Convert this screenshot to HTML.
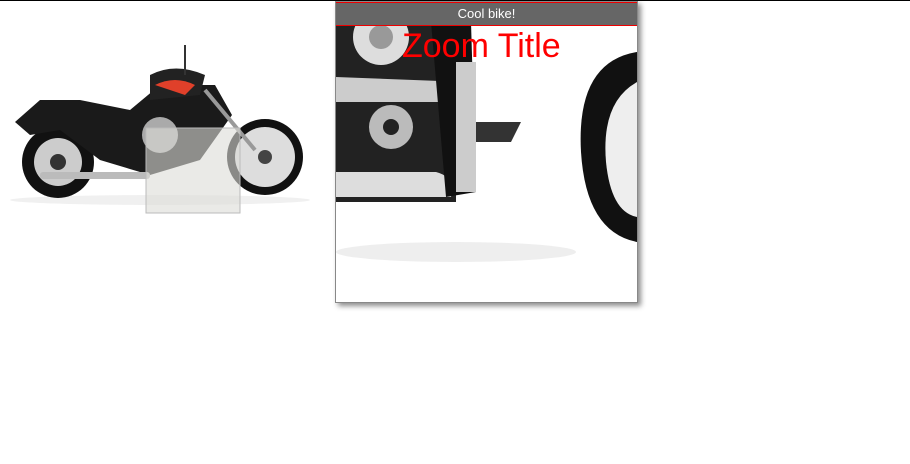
<!DOCTYPE html>
<html><head><style>
body{margin:0;width:910px;height:464px;background:#fff;position:relative;overflow:hidden;font-family:"Liberation Sans",sans-serif}
.topline{position:absolute;left:0;top:0;width:910px;height:1px;background:#000}
.zoom{position:absolute;left:335px;top:1px;width:301px;height:300px;border:1px solid #888;background:#fff;box-shadow:3px 3px 5px rgba(0,0,0,.45);overflow:hidden}
.bar{position:absolute;left:0;top:0;width:100%;height:22px;background:#666;border-top:1px solid #e00;border-bottom:1px solid #e00;color:#fff;font-size:13px;text-align:center;line-height:22px}
.zt{position:absolute;left:66px;top:24px;color:#f00;font-size:34px;line-height:40px}
</style></head><body>
<div class="topline"></div>
<svg style="position:absolute;left:0;top:0" width="330" height="230">
<ellipse cx="160" cy="200" rx="150" ry="5" fill="#f0f0f0"/>
<circle cx="58" cy="162" r="36" fill="#111"/><circle cx="58" cy="162" r="24" fill="#ccc"/><circle cx="58" cy="162" r="8" fill="#333"/>
<circle cx="265" cy="157" r="38" fill="#111"/><circle cx="265" cy="157" r="30" fill="#ddd"/><circle cx="265" cy="157" r="7" fill="#444"/>
<path d="M15 122 L40 100 L80 100 L130 110 L160 85 L215 85 L232 115 L200 160 L150 175 L100 160 L60 130 L30 135 Z" fill="#1a1a1a"/>
<path d="M150 75 Q175 62 205 75 L200 95 L150 100 Z" fill="#222"/>
<path d="M155 85 Q175 75 195 85 L185 95 Z" fill="#e0402a"/>
<rect x="40" y="172" width="110" height="7" rx="3" fill="#bbb"/>
<circle cx="160" cy="135" r="18" fill="#aaa"/>
<line x1="185" y1="45" x2="185" y2="75" stroke="#333" stroke-width="2"/>
<line x1="205" y1="90" x2="255" y2="150" stroke="#999" stroke-width="4"/>
<rect x="146" y="128" width="94" height="85" fill="rgba(220,220,215,.6)" stroke="#bbb"/>
</svg>
<div class="zoom">
<svg style="position:absolute;left:0;top:0" width="301" height="300">
<rect x="0" y="20" width="120" height="180" fill="#222"/>
<circle cx="45" cy="35" r="28" fill="#ddd"/><circle cx="45" cy="35" r="12" fill="#999"/>
<path d="M0 75 L130 80 L130 100 L0 100Z" fill="#ccc"/>
<path d="M0 170 L100 170 Q120 175 115 195 L0 195Z" fill="#ddd"/>
<circle cx="55" cy="125" r="22" fill="#bbb"/><circle cx="55" cy="125" r="8" fill="#222"/>
<path d="M95 20 L135 20 L140 190 L110 195Z" fill="#111"/>
<rect x="120" y="60" width="20" height="130" fill="#ccc"/>
<path d="M140 120 L185 120 L175 140 L140 140Z" fill="#333"/>
<path d="M301 50 Q240 60 245 150 Q250 230 301 240Z" fill="#111"/>
<path d="M301 80 Q265 100 270 160 Q275 210 301 215Z" fill="#eee"/>
<ellipse cx="120" cy="250" rx="120" ry="10" fill="#eee"/>
</svg>
<div class="bar">Cool bike!</div>
<div class="zt">Zoom Title</div>
</div>
</body></html>
